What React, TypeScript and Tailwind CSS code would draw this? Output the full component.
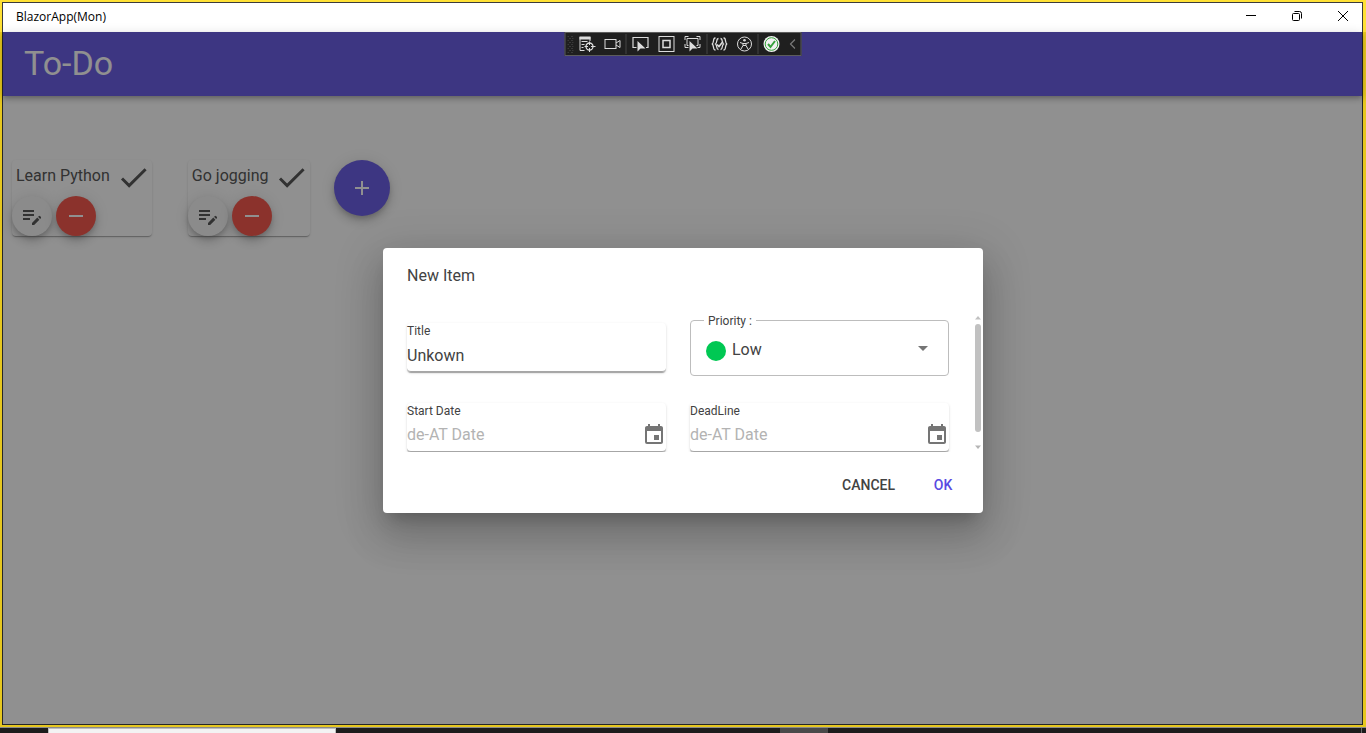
import React from "react";
import { MdAdd, MdArrowDropDown, MdCheck, MdEditNote, MdEvent, MdRemove } from "react-icons/md";

const elevation1 =
  "shadow-[0_2px_1px_-1px_rgba(0,0,0,0.2),0_1px_1px_0_rgba(0,0,0,0.14),0_1px_3px_0_rgba(0,0,0,0.12)]";
const elevationFab =
  "shadow-[0_3px_5px_-1px_rgba(0,0,0,0.2),0_6px_10px_0_rgba(0,0,0,0.14),0_1px_18px_0_rgba(0,0,0,0.12)]";

function TitleBar() {
  return (
    <header className="flex h-8 shrink-0 overflow-hidden border-l-2 border-r-[3px] border-t-2 border-[#ffe135]">
      <div className="flex min-w-0 flex-1 items-center justify-between border-x border-t border-[#3b3b3b] bg-white pl-[13px]">
        <span className="pb-0.5 font-['Open_Sans',sans-serif] text-xs leading-4 text-black">BlazorApp(Mon)</span>
        <div className="-mr-1 flex h-full shrink-0 text-black">
          <button aria-label="Minimize" className="flex w-[46px] items-center justify-center pb-1">
            <svg width="10" height="10" viewBox="0 0 10 10" stroke="currentColor" fill="none">
              <path d="M0 4.5h10" />
            </svg>
          </button>
          <button aria-label="Restore" className="flex w-[46px] items-center justify-center pb-1">
            <svg width="10" height="10" viewBox="0 0 10 10" stroke="currentColor" fill="none">
              <rect x="0.5" y="2.5" width="7" height="7" rx="1" />
              <path d="M2.5 .5H7.5a2 2 0 0 1 2 2V7.5" />
            </svg>
          </button>
          <button aria-label="Close" className="flex w-[46px] items-center justify-center pb-1">
            <svg width="10" height="10" viewBox="0 0 10 10" stroke="currentColor" fill="none">
              <path d="M0 0l10 10M10 0L0 10" />
            </svg>
          </button>
        </div>
      </div>
    </header>
  );
}

function ToolButton({ label, wide, children }: { label: string; wide?: boolean; children: React.ReactNode }) {
  return (
    <button aria-label={label} className={`flex h-full items-center justify-center ${wide ? "w-[26px]" : "w-[25px]"}`}>
      <svg width="18" height="16" viewBox="0 0 18 16" fill="none" stroke="#dcdcdc" strokeWidth="1">
        {children}
      </svg>
    </button>
  );
}

const cursorPath = "M6 5V15.5l3-3h5z";

function DebugToolbar() {
  return (
    <div className="absolute left-1/2 top-0 z-20 flex h-6 -translate-x-1/2 items-center border border-[#5c5c5c] bg-[#1f1f1f]">
      <span className="flex w-[10px] justify-center">
        <svg width="6" height="17" viewBox="0 0 6 17" fill="#555">
          {[0, 4, 8, 12, 16].map((y) => (
            <path key={y} d={`M0 ${y}h1v1h-1zM4 ${y}h1v1h-1z`} />
          ))}
          {[2, 6, 10, 14].map((y) => (
            <path key={y} d={`M2 ${y}h1v1h-1zM5 ${y}h1v1h-1z`} />
          ))}
        </svg>
      </span>
      <ToolButton label="Go to Live Visual Tree">
        <path d="M1.5 1v13.5H6M11.5 1v4" />
        <path d="M1 2h11" strokeWidth="3" />
        <path d="M3 5.5h6M3 8.5h3M3 11.5h2" />
        <circle cx="11" cy="10.5" r="3.5" strokeWidth="1.3" />
        <path d="M11 5.5v3.500M11 12v4M6 10.500h3.500M12.500 10.500H17" />
      </ToolButton>
      <ToolButton label="Record">
        <rect x="1.500" y="3.500" width="11" height="9" />
        <path d="M12.500 7l4-2.500v7l-4-2.500" />
      </ToolButton>
      <span className="mr-px h-5 w-px bg-[#454545]" />
      <ToolButton label="Select Element" wide>
        <path d="M5 11.500H1.500v-10h15v10h-2" strokeWidth="1.200" />
        <path d={cursorPath} fill="#dcdcdc" stroke="none" />
      </ToolButton>
      <ToolButton label="Display Layout Adorners" wide>
        <rect x="1.500" y=".5" width="15" height="15" />
        <rect x="5.500" y="4.500" width="7" height="7" strokeWidth="1.500" />
      </ToolButton>
      <ToolButton label="Track Focused Element" wide>
        <path d="M1.500 4V.5H5M13 .5h3.500V4M1.500 8v3.500H5M16.500 8v3.500H14" />
        <path d="M5 9.500H3.500v-7h11v7H13" />
        <path d={cursorPath} fill="#dcdcdc" stroke="none" />
      </ToolButton>
      <span className="ml-px h-5 w-px bg-[#454545]" />
      <ToolButton label="Binding Failures">
        <path d="M5 2H4.500C2.500 2 3.500 6.500 1.800 8 3.500 9.500 2.500 14 4.500 14H5M13 2h.5c2 0 1 4.500 2.700 6-1.700 1.500-.7 6-2.700 6H13" strokeWidth="1.300" />
        <path d="M8 2.500C5.500 2.500 7 6.500 5 8c2 1.500.5 5.500 3 5.500M10 2.500c2.500 0 1 4 3 5.500-2 1.500-.5 5.500-3 5.500" strokeWidth="1.300" />
        <path d="M6.500 8.500l2 2 4-5" strokeWidth="1.600" />
      </ToolButton>
      <ToolButton label="Accessibility Checker">
        <circle cx="9" cy="8" r="7" />
        <circle cx="9" cy="4.300" r="1.300" fill="#dcdcdc" stroke="none" />
        <path d="M4.500 6.500L7.500 7.500V9.500L5.500 13M13.500 6.500L10.500 7.500V9.500L12.500 13M7.500 7.500h3M7.500 9.500h3" />
      </ToolButton>
      <span className="h-5 w-px bg-[#454545]" />
      <ToolButton label="Hot Reload" wide>
        <circle cx="9" cy="8" r="8" fill="#f1f1f1" stroke="none" />
        <circle cx="9" cy="8" r="6.300" fill="#f1f1f1" stroke="#36a13c" />
        <path d="M5.500 8l2.500 3 4.500-6" stroke="#36a13c" strokeWidth="2" />
      </ToolButton>
      <button aria-label="Collapse toolbar" className="flex h-full w-4 items-center justify-center">
        <svg width="6" height="10" viewBox="0 0 6 10" fill="none" stroke="#777" strokeWidth="1.300">
          <path d="M5.500 .5L1 5l4.500 4.500" />
        </svg>
      </button>
    </div>
  );
}

function TodoCard({ title }: { title: string }) {
  return (
    <article className={`rounded bg-white pr-px ${elevation1}`}>
      <div className="flex h-9 items-start gap-1.5 pl-1">
        <h2 className="text-base leading-8">{title}</h2>
        <MdCheck size={35} />
      </div>
      <div className="flex gap-1">
        <button aria-label={`Edit ${title}`} className={`flex size-10 items-center justify-center rounded-full bg-[#f5f5f5] ${elevationFab}`}>
          <MdEditNote size={24} />
        </button>
        <button aria-label={`Remove ${title}`} className={`flex size-10 items-center justify-center rounded-full bg-[#f44336] text-white ${elevationFab}`}>
          <MdRemove size={24} />
        </button>
      </div>
    </article>
  );
}

function DateField({ id, label }: { id: string; label: string }) {
  return (
    <div className={`rounded border-b border-[#a6a6a6] ${elevation1}`}>
      <label htmlFor={id} className="block text-xs leading-4">
        {label}
      </label>
      <div className="flex h-8 items-center">
        <input id={id} type="text" placeholder="de-AT Date" className="min-w-0 flex-1 bg-transparent text-base leading-6 outline-none placeholder:text-[#b3b3b3]" />
        <button aria-label={`Pick ${label}`} className="text-[#757575]">
          <MdEvent size={24} />
        </button>
      </div>
    </div>
  );
}

function NewItemDialog() {
  return (
    <section
      role="dialog"
      aria-label="New Item"
      className="w-[600px] max-w-full rounded bg-white shadow-[0_11px_15px_-7px_rgba(0,0,0,0.2),0_24px_38px_3px_rgba(0,0,0,0.14),0_9px_46px_8px_rgba(0,0,0,0.12)]"
    >
      <h2 className="px-6 pb-6 pt-4 text-base leading-6">New Item</h2>
      <div className="flex">
        <div className="grid flex-1 grid-cols-2 gap-x-6 gap-y-[27px] overflow-hidden px-6 pt-2">
          <div className={`mt-[3px] self-start rounded border-b border-[#a6a6a6] ${elevation1}`}>
            <label htmlFor="title" className="block text-xs leading-4">
              Title
            </label>
            <input id="title" type="text" defaultValue="Unkown" className="block h-8 w-full bg-transparent text-base leading-6 outline-none" />
          </div>
          <div className="relative flex h-14 items-center rounded border border-[#bdbdbd] pl-[15px]">
            <label htmlFor="priority" className="absolute -top-2 left-[13px] bg-white px-1 text-xs leading-4">
              Priority :
            </label>
            <span className="mt-1.5 size-5 rounded-full bg-[#00c853]" />
            <select id="priority" defaultValue="Low" className="h-full min-w-0 flex-1 appearance-none bg-transparent pl-1.5 pt-1 text-base leading-6 outline-none">
              <option>Low</option>
              <option>Medium</option>
              <option>High</option>
            </select>
            <MdArrowDropDown size={24} className="pointer-events-none absolute right-[13px] text-[#757575]" />
          </div>
          <DateField id="start-date" label="Start Date" />
          <DateField id="deadline" label="DeadLine" />
        </div>
        <div aria-hidden="true" className="flex w-[10px] flex-col items-center gap-1 pt-1">
          <svg width="6" height="4" viewBox="0 0 6 4" fill="#c1c1c1">
            <path d="M0 3.500L3 0l3 3.500z" />
          </svg>
          <div className="flex w-full flex-1 justify-center pb-2">
            <div className="w-1.5 rounded-full bg-[#c1c1c1]" />
          </div>
          <svg width="6" height="8" viewBox="0 0 6 8" fill="#b5b5b5">
            <path d="M0 1.500L3 5l3-3.500z" />
          </svg>
        </div>
      </div>
      <footer className="flex justify-end gap-2 px-2 pb-[10px] pt-[15px] text-sm font-medium">
        <button className="h-9 min-w-16 rounded px-2 uppercase">Cancel</button>
        <button className="h-9 min-w-16 rounded px-2 uppercase text-[#594ae2]">Ok</button>
      </footer>
    </section>
  );
}

export default function App() {
  return (
    <div className="flex h-screen flex-col overflow-hidden bg-[#1c1c1c] font-[Roboto,sans-serif] text-[#424242]">
      <TitleBar />
      <div className="flex min-h-0 flex-1 border-b-2 border-l-2 border-r-[3px] border-[#e6c71f]">
        <div className="relative flex min-w-0 flex-1 flex-col border-x border-b border-[#262626] bg-white">
          <div className="flex h-16 shrink-0 items-center bg-[#594ae2] pb-0.5 pl-[21px] text-white shadow-[0_2px_4px_-1px_rgba(0,0,0,0.2),0_4px_5px_0_rgba(0,0,0,0.14),0_1px_10px_0_rgba(0,0,0,0.12)]">
            <h1 className="text-[34px] leading-10">To-Do</h1>
          </div>
          <main className="flex items-start gap-6 pl-[9px] pt-16">
            <div className="flex gap-9">
              <TodoCard title="Learn Python" />
              <TodoCard title="Go jogging" />
            </div>
            <button aria-label="Add item" className={`flex size-14 items-center justify-center rounded-full bg-[#594ae2] text-white ${elevationFab}`}>
              <MdAdd size={24} />
            </button>
          </main>
          <div className="absolute inset-0 flex items-center justify-center overflow-hidden bg-[#212121]/50 pl-px pt-[5px]">
            <NewItemDialog />
          </div>
          <DebugToolbar />
        </div>
      </div>
      <footer className="flex h-1.5 shrink-0 justify-between border-t border-[#8a8a8a] pl-12">
        <div className="w-72 border-x border-t border-[#bdbdbd] bg-[#f3f3f3]" />
        <div className="flex w-[586px] justify-between pr-1">
          <div className="w-12 bg-[#4a4a4a]" />
          <div className="w-px bg-[#6b6b6b]" />
        </div>
      </footer>
    </div>
  );
}
